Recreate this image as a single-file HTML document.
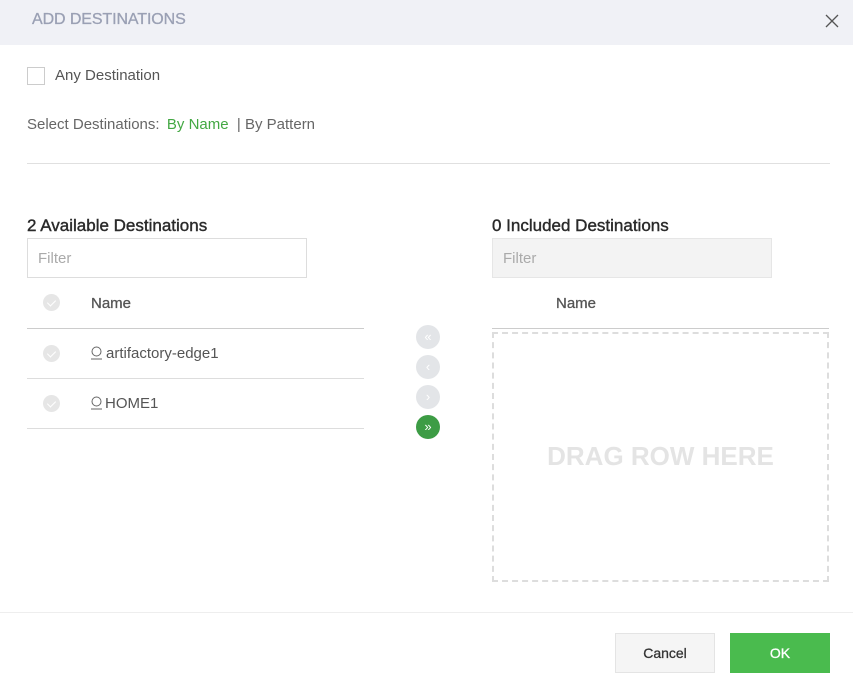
<!DOCTYPE html>
<html><head><style>
*{box-sizing:border-box;margin:0;padding:0}
body{width:853px;height:692px;background:#fff;font-family:"Liberation Sans",sans-serif;position:relative;overflow:hidden;color:#555}
.a{position:absolute}
.hdr{left:0;top:0;width:853px;height:45px;background:#f0f1f6}
.circ{width:17px;height:17px;border-radius:50%;background:#e6e6e6}
.circ:after{content:"";position:absolute;left:6px;top:4px;width:4px;height:7px;border:solid #fff;border-width:0 1.5px 1.5px 0;transform:rotate(45deg)}
.nav{width:24px;height:24px;border-radius:50%;background:#e3e5e8;color:#fff;font-size:13px;text-align:center;line-height:23px}
</style></head><body>
<div class="a hdr"></div>
<div class="a" style="left:32px;top:11px;font-size:16px;color:#9aa0b4;letter-spacing:-.1px;-webkit-text-stroke:.3px #9aa0b4">ADD DESTINATIONS</div>
<svg class="a" style="left:825px;top:14px" width="14" height="14"><path d="M1 1L13 13M13 1L1 13" stroke="#555" stroke-width="1.3"/></svg>
<div class="a" style="left:27px;top:67px;width:18px;height:18px;border:1px solid #ccc"></div>
<div class="a" style="left:55px;top:67px;font-size:15px;color:#555">Any Destination</div>
<div class="a" style="left:27px;top:116px;font-size:15px;color:#666">Select Destinations:&nbsp;&nbsp;<span style="color:#43a843;margin-left:-1px">By Name</span>&nbsp;&nbsp;| By Pattern</div>
<div class="a" style="left:27px;top:163px;width:803px;height:1px;background:#e0e0e0"></div>

<div class="a" style="left:27px;top:216px;font-size:17px;color:#2a2a2a;-webkit-text-stroke:.4px #2a2a2a">2 Available Destinations</div>
<div class="a" style="left:27px;top:238px;width:280px;height:40px;border:1px solid #ddd;padding:11px 10px;font-size:15px;color:#aaa">Filter</div>
<div class="a circ" style="left:43px;top:294px"></div>
<div class="a" style="left:91px;top:295px;font-size:15px;color:#555;-webkit-text-stroke:.3px #555">Name</div>
<div class="a" style="left:27px;top:328px;width:337px;height:1px;background:#ccc"></div>
<div class="a circ" style="left:43px;top:345px"></div>
<svg class="a" style="left:90px;top:346px" width="14" height="14"><circle cx="6.5" cy="5.5" r="4.5" fill="none" stroke="#666" stroke-width="1"/><path d="M1 13H12" stroke="#666"/></svg>
<div class="a" style="left:106px;top:345px;font-size:15px;color:#555">artifactory-edge1</div>
<div class="a" style="left:27px;top:378px;width:337px;height:1px;background:#ddd"></div>
<div class="a circ" style="left:43px;top:395px"></div>
<svg class="a" style="left:90px;top:396px" width="14" height="14"><circle cx="6.5" cy="5.5" r="4.5" fill="none" stroke="#666" stroke-width="1"/><path d="M1 13H12" stroke="#666"/></svg>
<div class="a" style="left:105px;top:395px;font-size:15px;color:#555">HOME1</div>
<div class="a" style="left:27px;top:428px;width:337px;height:1px;background:#ddd"></div>

<div class="a nav" style="left:416px;top:325px">«</div>
<div class="a nav" style="left:416px;top:355px">‹</div>
<div class="a nav" style="left:416px;top:385px">›</div>
<div class="a nav" style="left:416px;top:415px;background:#3d9c45">»</div>

<div class="a" style="left:492px;top:216px;font-size:17px;color:#2a2a2a;-webkit-text-stroke:.4px #2a2a2a">0 Included Destinations</div>
<div class="a" style="left:492px;top:238px;width:280px;height:40px;background:#f3f3f3;border:1px solid #e6e6e6;padding:11px 10px;font-size:15px;color:#aaa">Filter</div>
<div class="a" style="left:556px;top:295px;font-size:15px;color:#555;-webkit-text-stroke:.3px #555">Name</div>
<div class="a" style="left:492px;top:328px;width:337px;height:1px;background:#ccc"></div>
<div class="a" style="left:492px;top:332px;width:337px;height:250px;border:2px dashed #ddd"></div>
<div class="a" style="left:492px;top:441px;width:337px;text-align:center;font-size:26px;color:#e4e4e4;font-weight:bold">DRAG ROW HERE</div>

<div class="a" style="left:0;top:612px;width:853px;height:1px;background:#eee"></div>
<div class="a" style="left:615px;top:633px;width:100px;height:40px;background:#f5f5f5;border:1px solid #e4e4e4;text-align:center;line-height:38px;font-size:14px;color:#333;-webkit-text-stroke:.3px #333">Cancel</div>
<div class="a" style="left:730px;top:633px;width:100px;height:40px;background:#4abb4e;text-align:center;line-height:40px;font-size:14px;color:#fff;-webkit-text-stroke:.3px #fff">OK</div>
</body></html>
